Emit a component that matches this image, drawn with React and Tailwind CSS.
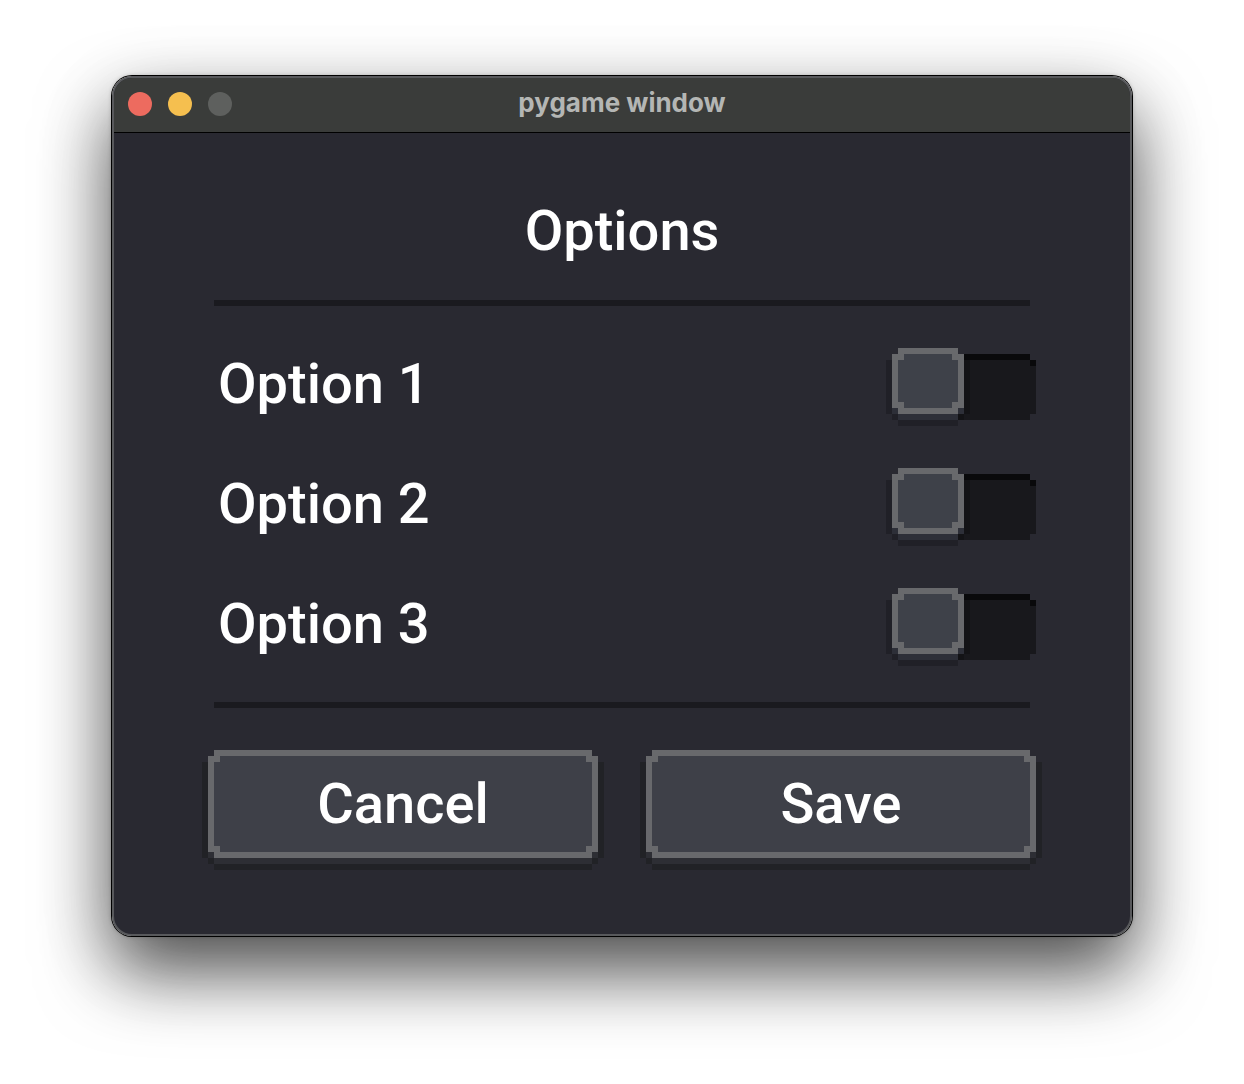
import { useState } from "react";

const OPTIONS = ["Option 1", "Option 2", "Option 3"];

function Divider() {
  return <hr className="h-[6px] border-0 bg-[#1a1a1f]" />;
}

function PixelSwitch({ id, checked, onChange }) {
  return (
    <input
      id={id}
      type="checkbox"
      role="switch"
      checked={checked}
      onChange={onChange}
      className="-mr-[6px] h-[72px] w-36 shrink-0 cursor-pointer appearance-none bg-[linear-gradient(#09090b,#09090b),linear-gradient(#09090b,#09090b),linear-gradient(#18181c,#18181c),linear-gradient(#18181c,#18181c)] bg-[size:126px_6px,6px_6px,126px_60px,6px_48px] bg-[position:12px_6px,138px_12px,12px_12px,138px_18px] bg-no-repeat p-[6px] before:block before:h-[54px] before:w-[60px] before:bg-[#3e4149] before:bg-[linear-gradient(#68696c,#68696c),linear-gradient(#68696c,#68696c),linear-gradient(#68696c,#68696c),linear-gradient(#68696c,#68696c)] before:bg-[size:6px_6px] before:bg-[position:left_top,right_top,left_bottom,right_bottom] before:bg-no-repeat before:shadow-[0_-6px_#68696c,0_6px_#68696c,-6px_0_#68696c,6px_0_#68696c,0_12px_#2d2f38,-6px_6px_#2d2f38,6px_6px_#2d2f38,-12px_6px_#00000033,12px_6px_#00000033,-6px_12px_#00000033,6px_12px_#00000033,0_18px_#00000033] before:content-[''] checked:before:translate-x-[72px]"
    />
  );
}

function PixelButton({ children, onClick }) {
  return (
    <button
      type="button"
      onClick={onClick}
      className="flex h-24 cursor-pointer items-center justify-center bg-[#3e4048] bg-[linear-gradient(#68696c,#68696c),linear-gradient(#68696c,#68696c),linear-gradient(#68696c,#68696c),linear-gradient(#68696c,#68696c)] bg-[size:6px_6px] bg-[position:left_top,right_top,left_bottom,right_bottom] bg-no-repeat font-medium shadow-[0_-6px_#68696c,0_6px_#68696c,-6px_0_#68696c,6px_0_#68696c,0_12px_#2d2e34,-6px_6px_#2d2e34,6px_6px_#2d2e34,-12px_6px_#212226,12px_6px_#212226,-6px_12px_#212226,6px_12px_#212226,0_18px_#212226]"
    >
      {children}
    </button>
  );
}

export default function App() {
  const [values, setValues] = useState([false, false, false]);
  const toggle = (index) =>
    setValues((current) => current.map((v, i) => (i === index ? !v : v)));
  const reset = () => setValues([false, false, false]);

  return (
    <div className="min-h-screen overflow-hidden bg-white px-28 pt-19 pb-37">
      <div className="rounded-[20px] shadow-[0_0_0_1px_#000,0_0_4px_rgba(0,0,0,0.3),0_36px_72px_rgba(0,0,0,0.66),0_20px_80px_rgba(0,0,0,0.12)]">
        <div className="overflow-hidden rounded-[20px] border-2 border-[#58595c] bg-[#292931]">
          <header className="grid h-[55px] grid-cols-[1fr_auto_1fr] items-center border-b border-black bg-[#3a3c3a] px-[14px] pb-[2px]">
            <div className="flex gap-4">
              <button type="button" aria-label="Close" className="size-6 rounded-full bg-[#ed6b5f]" />
              <button type="button" aria-label="Minimize" className="size-6 rounded-full bg-[#f5bf4f]" />
              <button type="button" aria-label="Zoom" disabled className="size-6 rounded-full bg-[#5e605e]" />
            </div>
            <div className="pb-[2px] font-['Inter',sans-serif] text-[26px] leading-8 font-bold text-[#b4b6b4]">
              pygame window
            </div>
          </header>
          <main className="px-25 pb-[82px] font-['Roboto',sans-serif] text-[56px] leading-[64px] font-medium text-white">
            <h1 className="pt-[66px] pb-[37px] text-center font-medium">Options</h1>
            <Divider />
            <div className="py-[18px]">
              {OPTIONS.map((name, index) => (
                <div key={name} className="flex h-30 items-center justify-between">
                  <label htmlFor={`option-${index}`} className="pl-1">{name}</label>
                  <PixelSwitch
                    id={`option-${index}`}
                    checked={values[index]}
                    onChange={() => toggle(index)}
                  />
                </div>
              ))}
            </div>
            <Divider />
            <div className="mt-12 grid grid-cols-2 gap-[60px]">
              <PixelButton onClick={reset}>Cancel</PixelButton>
              <PixelButton>Save</PixelButton>
            </div>
          </main>
        </div>
      </div>
    </div>
  );
}
